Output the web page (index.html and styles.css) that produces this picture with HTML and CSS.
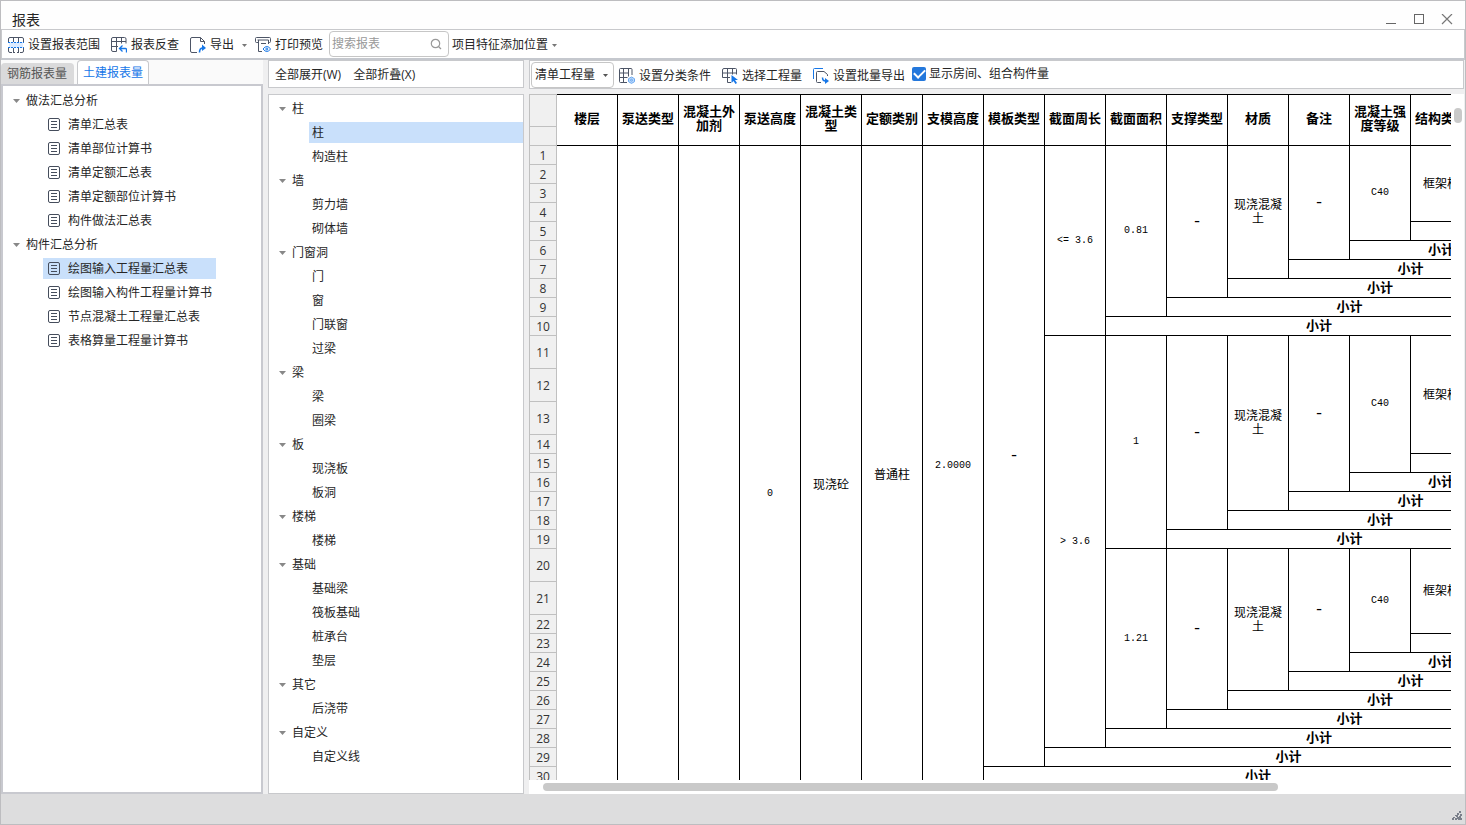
FILE: index.html
```html
<!DOCTYPE html>
<html lang="zh-CN">
<head>
<meta charset="utf-8">
<title>报表</title>
<link rel="stylesheet" href="styles.css">
</head>
<body>
<svg class="defs" aria-hidden="true">
  <symbol id="doc" viewBox="0 0 14 14"><rect x="1.500" y=".5" width="11" height="12" rx="1.500" fill="none" stroke="currentColor"/><path d="M4 3.500h6M4 6.500h6M4 9.500h6" stroke="currentColor" fill="none"/></symbol>
  <symbol id="arrow" viewBox="0 0 7 4"><path d="M0 0h7L3.500 4z" fill="currentColor"/></symbol>
</svg>
<div class="window">
  <header class="titlebar">
    <h1>报表</h1>
    <div class="win-buttons">
      <button type="button" aria-label="最小化"><svg width="12" height="12"><path d="M1 9.500h10" stroke="#666" fill="none"/></svg></button>
      <button type="button" aria-label="最大化"><svg width="12" height="12"><rect x="1.500" y=".5" width="9" height="9" stroke="#666" fill="none"/></svg></button>
      <button type="button" aria-label="关闭"><svg width="12" height="12"><path d="M1 0l10 10M11 0L1 10" stroke="#777" stroke-width="1.200" fill="none"/></svg></button>
    </div>
  </header>

  <div class="toolbar main-toolbar">
    <button type="button" class="tool">
      <svg width="16" height="16" viewBox="0 0 16 16" fill="none"><path d="M1 5h14v6H1z" fill="#dcebff"/><path d="M.5 5V2Q.5.500 2 .500h12q1.500 0 1.500 1.500v3M.5 11v3q0 1.500 1.500 1.500M14 15.500q1.500 0 1.500-1.500v-3M5.500.500V5M10.500.500V5M5.500 11v4M10.500 11v4M2 15.500h2M5 15.500h2M9 15.500h2M12 15.500h2" stroke="#4d5566"/><path d="M0 5.500h16M0 10.500h16" stroke="#1677e8" stroke-dasharray="2 1"/></svg>
      设置报表范围</button>
    <button type="button" class="tool">
      <svg width="16" height="16" viewBox="0 0 16 16" fill="none"><path d="M.5 13V2Q.5.500 2 .500h11.500q1.500 0 1.500 1.500v4.500M.5 4.500h14.500M.5 9.500H7M5.500.500v14M10.500.500v6M.5 13q0 1.500 1.500 1.500h3.500" stroke="#4d5566"/><path d="M9 11.500h5.500q1 0 1 1v3M11.500 8.500l-3 3 3 3" stroke="#1677e8" stroke-width="1.300"/></svg>
      报表反查</button>
    <button type="button" class="tool export">
      <svg width="16" height="16" viewBox="0 0 16 16" fill="none"><path d="M7 15.500H2Q.5 15.500.5 14V2Q.5.500 2 .500h8.500l4 4V7M10.500.500v4h4" stroke="#4d5566"/><path d="M9.500 15.500q0-4.500 3.500-4.500" stroke="#1677e8" stroke-width="1.600"/><path d="M12 7.500l4 3.500-4 3z" fill="#1677e8"/></svg>
      导出
      <svg class="caret" width="5" height="3"><use href="#arrow"/></svg></button>
    <button type="button" class="tool">
      <svg width="16" height="16" viewBox="0 0 16 16" fill="none"><path d="M3 5.500H1.500q-1 0-1-1v-3q0-1 1-1h13q1 0 1 1v3q0 1-1 1H14M2.500 3h11M3.500 3v11.500H7M13.500 3v4M6 6.500h5" stroke="#4d5566"/><path d="M8 12q3.800-5 7.600 0q-3.800 5-7.600 0z" stroke="#1677e8"/><circle cx="11.800" cy="12" r="1" stroke="#1677e8"/></svg>
      打印预览</button>
    <div class="search">
      <input type="text" placeholder="搜索报表" aria-label="搜索报表">
      <svg width="12" height="12" fill="none" stroke="#999" stroke-width="1.200"><circle cx="5.500" cy="5.500" r="4.200"/><path d="M8.500 8.500l2.500 2.500"/></svg>
    </div>
    <button type="button" class="tool feature">项目特征添加位置 <svg class="caret" width="5" height="3"><use href="#arrow"/></svg></button>
  </div>

  <main class="workspace">
    <aside class="reports">
      <div class="tabs" role="tablist">
        <button type="button" role="tab" class="tab" aria-selected="false">钢筋报表量</button>
        <button type="button" role="tab" class="tab active" aria-selected="true">土建报表量</button>
      </div>
      <div class="report-tree">
        <h2 class="branch"><svg width="7" height="4"><use href="#arrow"/></svg>做法汇总分析</h2>
        <ul>
          <li><svg width="14" height="14"><use href="#doc"/></svg>清单汇总表</li>
          <li><svg width="14" height="14"><use href="#doc"/></svg>清单部位计算书</li>
          <li><svg width="14" height="14"><use href="#doc"/></svg>清单定额汇总表</li>
          <li><svg width="14" height="14"><use href="#doc"/></svg>清单定额部位计算书</li>
          <li><svg width="14" height="14"><use href="#doc"/></svg>构件做法汇总表</li>
        </ul>
        <h2 class="branch"><svg width="7" height="4"><use href="#arrow"/></svg>构件汇总分析</h2>
        <ul>
          <li class="selected"><svg width="14" height="14"><use href="#doc"/></svg>绘图输入工程量汇总表</li>
          <li><svg width="14" height="14"><use href="#doc"/></svg>绘图输入构件工程量计算书</li>
          <li><svg width="14" height="14"><use href="#doc"/></svg>节点混凝土工程量汇总表</li>
          <li><svg width="14" height="14"><use href="#doc"/></svg>表格算量工程量计算书</li>
        </ul>
      </div>
    </aside>

    <section class="components">
      <div class="toolbar expand-bar">
        <button type="button" class="tool">全部展开(W)</button>
        <button type="button" class="tool">全部折叠(X)</button>
      </div>
      <div class="component-tree">
        <h2 class="branch"><svg width="7" height="4"><use href="#arrow"/></svg>柱</h2>
        <ul><li class="selected">柱</li><li>构造柱</li></ul>
        <h2 class="branch"><svg width="7" height="4"><use href="#arrow"/></svg>墙</h2>
        <ul><li>剪力墙</li><li>砌体墙</li></ul>
        <h2 class="branch"><svg width="7" height="4"><use href="#arrow"/></svg>门窗洞</h2>
        <ul><li>门</li><li>窗</li><li>门联窗</li><li>过梁</li></ul>
        <h2 class="branch"><svg width="7" height="4"><use href="#arrow"/></svg>梁</h2>
        <ul><li>梁</li><li>圈梁</li></ul>
        <h2 class="branch"><svg width="7" height="4"><use href="#arrow"/></svg>板</h2>
        <ul><li>现浇板</li><li>板洞</li></ul>
        <h2 class="branch"><svg width="7" height="4"><use href="#arrow"/></svg>楼梯</h2>
        <ul><li>楼梯</li></ul>
        <h2 class="branch"><svg width="7" height="4"><use href="#arrow"/></svg>基础</h2>
        <ul><li>基础梁</li><li>筏板基础</li><li>桩承台</li><li>垫层</li></ul>
        <h2 class="branch"><svg width="7" height="4"><use href="#arrow"/></svg>其它</h2>
        <ul><li>后浇带</li></ul>
        <h2 class="branch"><svg width="7" height="4"><use href="#arrow"/></svg>自定义</h2>
        <ul><li>自定义线</li></ul>
      </div>
    </section>

    <section class="report">
      <div class="toolbar report-bar">
        <div class="select">
          <select aria-label="工程量类型"><option>清单工程量</option></select>
          <svg width="5" height="3"><use href="#arrow"/></svg>
        </div>
        <button type="button" class="tool">
          <svg width="16" height="16" viewBox="0 0 16 16" fill="none"><path d="M8 14.500H1.500q-1 0-1-1v-12q0-1 1-1H12q1 0 1 1V7M4.500.500v14M9.500.500v8M.5 5h9M.5 9.500h8" stroke="#4d5566"/><g fill="#bcd9fb" stroke="#6aa9f2"><path d="M12.500 9l3 1.700v3l-3 1.700-3-1.700v-3z"/><circle cx="12.500" cy="12.200" r="1"/></g></svg>
          设置分类条件</button>
        <button type="button" class="tool">
          <svg width="16" height="16" viewBox="0 0 16 16" fill="none"><path d="M8 9.500H.5V2Q.5.500 2 .500h11.500q1 0 1 1v5M.5 5h14M5.500.500v14H9M10.500.500v6" stroke="#4d5566"/><path d="M9.500 7l6.500 5h-3l2 3-1.500 1-2-3-2 2z" fill="#1677e8"/></svg>
          选择工程量</button>
        <button type="button" class="tool">
          <svg width="16" height="16" viewBox="0 0 16 16" fill="none"><path d="M.5 11V1.500q0-1 1-1H10" stroke="#1677e8"/><path d="M8 14.500H4.500q-1 0-1-1v-9q0-1 1-1H11l3.500 3V8" stroke="#4d5566"/><path d="M9.500 9.500q0 3.500 3 3.500" stroke="#1677e8" stroke-width="1.500"/><path d="M12 10l4 3-4 3z" fill="#1677e8"/></svg>
          设置批量导出</button>
        <label class="check"><input type="checkbox" checked>显示房间、组合构件量</label>
      </div>
      <div class="sheet">
        <div class="viewport">
          <table>
            <thead>
              <tr><td class="no top"></td><th rowspan="2">楼层</th><th rowspan="2">泵送类型</th><th rowspan="2">混凝土外加剂</th><th rowspan="2">泵送高度</th><th rowspan="2">混凝土类型</th><th rowspan="2">定额类别</th><th rowspan="2">支模高度</th><th rowspan="2">模板类型</th><th rowspan="2">截面周长</th><th rowspan="2">截面面积</th><th rowspan="2">支撑类型</th><th rowspan="2">材质</th><th rowspan="2">备注</th><th rowspan="2">混凝土强度等级</th><th rowspan="2">结构类型</th><th rowspan="2"></th></tr>
              <tr><td class="no"></td></tr>
            </thead>
            <tbody>
              <tr><th class="no">1</th><td rowspan="36"></td><td rowspan="35"></td><td rowspan="34"></td><td rowspan="33" class="num">0</td><td rowspan="32">现浇砼</td><td rowspan="31">普通柱</td><td rowspan="30" class="num">2.0000</td><td rowspan="29" class="num dash">-</td><td rowspan="10" class="num">&lt;= 3.6</td><td rowspan="9" class="num">0.81</td><td rowspan="8" class="num dash">-</td><td rowspan="7">现浇混凝土</td><td rowspan="6" class="num dash">-</td><td rowspan="5" class="num">C40</td><td rowspan="4">框架柱</td><td rowspan="4"></td></tr>
              <tr><th class="no">2</th></tr>
              <tr><th class="no">3</th></tr>
              <tr><th class="no">4</th></tr>
              <tr><th class="no">5</th><th colspan="2">小计</th></tr>
              <tr><th class="no">6</th><th colspan="3">小计</th></tr>
              <tr><th class="no">7</th><th colspan="4">小计</th></tr>
              <tr><th class="no">8</th><th colspan="5">小计</th></tr>
              <tr><th class="no">9</th><th colspan="6">小计</th></tr>
              <tr><th class="no">10</th><th colspan="7">小计</th></tr>
              <tr><th class="no tall">11</th><td rowspan="18" class="num">&gt; 3.6</td><td rowspan="9" class="num">1</td><td rowspan="8" class="num dash">-</td><td rowspan="7">现浇混凝土</td><td rowspan="6" class="num dash">-</td><td rowspan="5" class="num">C40</td><td rowspan="4">框架柱</td><td rowspan="4"></td></tr>
              <tr><th class="no tall">12</th></tr>
              <tr><th class="no tall">13</th></tr>
              <tr><th class="no">14</th></tr>
              <tr><th class="no">15</th><th colspan="2">小计</th></tr>
              <tr><th class="no">16</th><th colspan="3">小计</th></tr>
              <tr><th class="no">17</th><th colspan="4">小计</th></tr>
              <tr><th class="no">18</th><th colspan="5">小计</th></tr>
              <tr><th class="no">19</th><th colspan="6">小计</th></tr>
              <tr><th class="no tall">20</th><td rowspan="8" class="num">1.21</td><td rowspan="7" class="num dash">-</td><td rowspan="6">现浇混凝土</td><td rowspan="5" class="num dash">-</td><td rowspan="4" class="num">C40</td><td rowspan="3">框架柱</td><td rowspan="3"></td></tr>
              <tr><th class="no tall">21</th></tr>
              <tr><th class="no">22</th></tr>
              <tr><th class="no">23</th><th colspan="2">小计</th></tr>
              <tr><th class="no">24</th><th colspan="3">小计</th></tr>
              <tr><th class="no">25</th><th colspan="4">小计</th></tr>
              <tr><th class="no">26</th><th colspan="5">小计</th></tr>
              <tr><th class="no">27</th><th colspan="6">小计</th></tr>
              <tr><th class="no">28</th><th colspan="7">小计</th></tr>
              <tr><th class="no">29</th><th colspan="8">小计</th></tr>
              <tr><th class="no">30</th><th colspan="9">小计</th></tr>
              <tr><th class="no"></th><th colspan="10"></th></tr>
              <tr><th class="no"></th><th colspan="11"></th></tr>
              <tr><th class="no"></th><th colspan="12"></th></tr>
              <tr><th class="no"></th><th colspan="13"></th></tr>
              <tr><th class="no"></th><th colspan="14"></th></tr>
              <tr><th class="no"></th><th colspan="15"></th></tr>
            </tbody>
          </table>
        </div>
        <div class="scroll-y"><div class="thumb"></div></div>
        <div class="scroll-x"><div class="thumb"></div></div>
      </div>
    </section>
  </main>

  <footer class="statusbar">
    <svg width="10" height="10" fill="#7a7f8a"><path d="M7 0h2v2H7zM5 2h2v2H5zM8 3h2v2H8zM3 4h1v1H3zM4 4h2v2H4zM7 5h2v2H7zM1 6h2v1H1zM0 7h2v2H0zM3 7h2v2H3zM5 6h2v2H5zM6 7h2v2H6zM8 7h2v2H8z"/></svg>
  </footer>
</div>
</body>
</html>
```
FILE: styles.css
```css
* { box-sizing: border-box; }

body {
  margin: 0;
  font: 12px/16px "Open Sans", "Noto Sans CJK SC", sans-serif;
  color: #262626;
}

button, input, select { font: inherit; color: inherit; }
h1, h2 { margin: 0; font: inherit; }
ul { margin: 0; padding: 0; list-style: none; }
svg { display: block; flex: none; }
.defs { position: absolute; width: 0; height: 0; }

.window {
  display: flex;
  flex-direction: column;
  height: 100vh;
  border: 1px solid #bdbdc0;
  background: #efeff0;
  overflow: hidden;
}

.titlebar {
  display: flex;
  justify-content: space-between;
  align-items: flex-end;
  height: 28px;
  padding: 0 12px 0 11px;
  background: #fefefe;
}
.titlebar h1 { font-size: 14px; line-height: 18px; }
.win-buttons { display: flex; gap: 16px; padding-bottom: 3px; }
.win-buttons button { padding: 0; border: 0; background: none; }

.toolbar {
  display: flex;
  align-items: center;
  background: #fff;
  border: 1px solid #c8c9cc;
}
.tool {
  display: flex;
  align-items: center;
  gap: 4px;
  padding: 2px 0 0;
  border: 0;
  background: none;
  white-space: nowrap;
}
.caret { color: #777; margin-left: 4px; }

.main-toolbar {
  height: 31px;
  padding-left: 6px;
  border-bottom: 2px solid #c5c8ce;
  gap: 11px;
}
.main-toolbar .export { gap: 4px; margin-right: -3px; }

.search {
  display: flex;
  align-items: center;
  width: 120px;
  height: 26px;
  margin: 0 -8px 0 -5px;
  padding: 0 6px 0 2px;
  border: 1px solid #c6c6c6;
  border-radius: 4px;
}
.search input {
  flex: 1;
  min-width: 0;
  padding: 0;
  border: 0;
  outline: 0;
  background: none;
}
.search input::placeholder { color: #999; opacity: 1; }
.feature { gap: 0; }

.workspace {
  flex: 1;
  min-height: 0;
  display: grid;
  grid-template-columns: 262px 256px 1fr;
  column-gap: 5px;
  padding-right: 1px;
}

.reports { display: flex; flex-direction: column; min-height: 0; }
.tabs {
  display: flex;
  align-items: flex-end;
  gap: 3px;
  height: 24px;
  background: #fafafa;
}
.tab {
  height: 21px;
  padding: 0 7px 0 6px;
  border: 0;
  border-radius: 4px 4px 0 0;
  background: #dadadb;
  color: #555;
}
.tab.active {
  height: 24px;
  padding: 0 5px;
  border: 1px solid #c8c9cc;
  border-bottom: 0;
  background: #fff;
  color: #1677e8;
}
.report-tree {
  flex: 1;
  padding-top: 3px;
  border: 2px solid #c8c9cf;
  background: #fff;
}
.branch {
  display: flex;
  align-items: center;
  gap: 6px;
  height: 24px;
  padding-left: 10px;
}
.branch svg { color: #888; margin-bottom: 1px; }
.report-tree li {
  display: flex;
  align-items: center;
  gap: 7px;
  width: 173px;
  height: 21px;
  margin: 0 0 3px 40px;
  padding-left: 4px;
  white-space: nowrap;
}
.report-tree ul,
.component-tree ul { padding-top: 1px; margin-bottom: -1px; }
.report-tree li svg { color: #454d5c; }
li.selected { background: #c9e0fb; }

.components { display: flex; flex-direction: column; gap: 6px; min-height: 0; }
.expand-bar { height: 28px; padding: 0 6px; gap: 12px; }
.component-tree {
  flex: 1;
  padding-top: 2px;
  border: 1px solid #c8c9cc;
  background: #fff;
}
.component-tree li {
  height: 21px;
  margin: 0 0 3px 40px;
  padding-left: 3px;
  line-height: 21px;
}

.report { display: flex; flex-direction: column; gap: 5px; min-width: 0; min-height: 0; }
.report-bar { height: 29px; padding-left: 1px; gap: 11px; }
.select { position: relative; margin-right: -6px; }
.select select {
  display: block;
  width: 83px;
  height: 26px;
  padding: 0 3px;
  border: 1px solid #c6c6c6;
  border-radius: 4px;
  background: #fff;
  appearance: none;
}
.select svg { position: absolute; right: 6px; top: 12px; color: #555; }
.check { display: flex; align-items: center; gap: 3px; margin-left: -4px; padding-bottom: 2px; }
.check input {
  appearance: none;
  width: 14px;
  height: 14px;
  margin: 0;
  border-radius: 2px;
  background: #2478dc;
  display: grid;
  place-items: center;
}
.check input:checked::before {
  content: "";
  width: 9px;
  height: 5px;
  margin-bottom: 3px;
  border: solid #fff;
  border-width: 0 0 2px 2px;
  transform: rotate(-45deg);
}

.sheet {
  flex: 1;
  min-height: 0;
  display: grid;
  grid-template-columns: 1fr 13px;
  grid-template-rows: 1fr 14px;
  background: #fff;
}
.viewport { overflow: hidden; min-width: 0; min-height: 0; }
table {
  width: 1004px;
  table-layout: fixed;
  border-collapse: separate;
  border-spacing: 0;
  border-left: 1px solid #c0c0c0;
  font: 12px/14px "Noto Sans CJK SC", sans-serif;
  color: #000;
}
th, td {
  padding: 0 0 2px;
  border: solid #000;
  border-width: 0 1px 1px 0;
  text-align: center;
  vertical-align: middle;
}
th { font-size: 13px; font-weight: 700; }
thead th { border-top-width: 1px; padding: 0 2px 4px; }
td:not(.num) { padding: 0 5px 2px; }
.num { padding: 0; font-family: "Liberation Mono", monospace; font-size: 10px; }
.dash { font-size: 16px; }
.no, td.no {
  width: 27px;
  height: 19px;
  padding: 1px 0 0;
  border-color: #c0c0c0;
  background: #f0f0f0;
  color: #333;
  font: 12px/16px "Open Sans", sans-serif;
}
.no.top { height: 33px; border-top-width: 1px; }
.no.tall { height: 33px; }

.scroll-y { padding: 14px 2px 0 3px; }
.scroll-y .thumb { height: 15px; }
.scroll-x { padding: 3px 0 0 14px; }
.scroll-x .thumb { width: 81%; height: 8px; }
.thumb { border-radius: 4px; background: #c9c9c9; }

.statusbar {
  display: flex;
  justify-content: flex-end;
  align-items: flex-end;
  height: 30px;
  padding: 0 3px 3px;
  background: #ddddde;
}
```
